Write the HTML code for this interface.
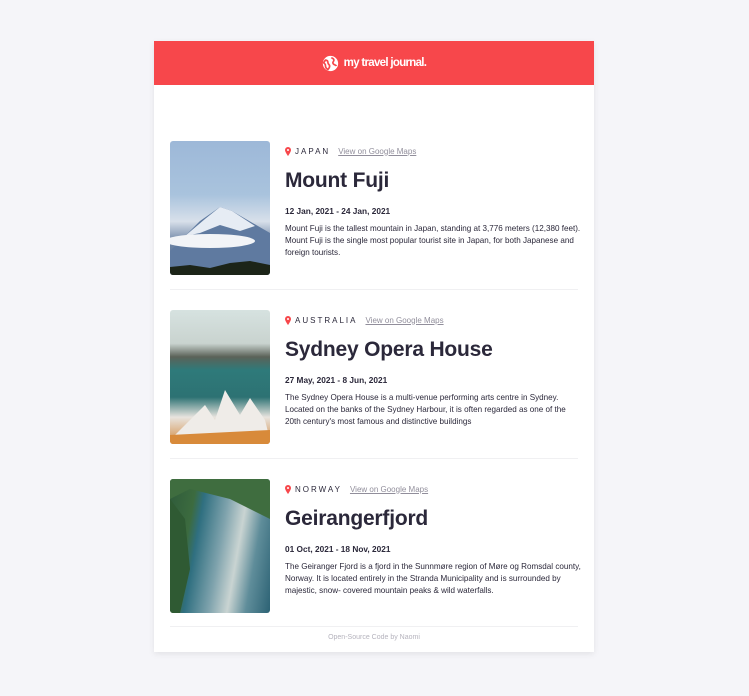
<!DOCTYPE html>
<html><head><meta charset="utf-8"><style>
*{margin:0;padding:0;box-sizing:border-box}
body{width:749px;height:696px;background:#f5f5f9;font-family:"Liberation Sans",sans-serif;position:relative;overflow:hidden}
.card{position:absolute;left:154px;top:41px;width:440px;height:611px;background:#fff;box-shadow:0 2px 6px rgba(0,0,0,.08)}
.hdr{height:44px;background:#f7474b;display:flex;align-items:center;justify-content:center;color:#fff;font-weight:bold;font-size:11.5px;letter-spacing:-0.7px}
.hdr svg{margin-right:5px}
.e{position:absolute;left:16px;width:408px;height:169px}
.img{position:absolute;left:0;top:0;width:100px;height:134px;border-radius:3px;overflow:hidden}
.t{position:absolute;left:115px;top:0;width:296px;color:#2b283a}
.c{font-size:8px;letter-spacing:2px;margin-top:5px;height:10px;display:flex;align-items:center}
.c svg{margin-right:4px}
.c a{color:#918e9b;letter-spacing:0;text-decoration:underline;margin-left:8px;font-size:8px}
h1{font-size:21px;font-weight:bold;margin-top:12px;height:26px;line-height:26px;letter-spacing:-0.2px}
.d{font-size:8.3px;font-weight:bold;margin-top:12px;line-height:10px}
.p{font-size:8.1px;line-height:12px;margin-top:7px}
.hr{position:absolute;left:16px;width:408px;height:1px;background:#f0f0f2}
.f{position:absolute;top:593px;width:100%;text-align:center;font-size:7px;color:#b5b3bd}
</style></head><body>
<div class="card">
<div class="hdr"><svg width="17" height="17" viewBox="0 0 20 20"><circle cx="10" cy="10" r="9" fill="#fff"/><path d="M4 6c2 0 3 1 3 3s2 2 2 4-1 3-2 4c-2-1-3-3-3-5s-2-2-2-3zM11 3c1 1 3 1 3 3s-2 2-1 4 3 1 4 3" fill="none" stroke="#f7474b" stroke-width="2"/></svg>my travel journal.</div>
<div class="e" style="top:100px">
<div class="img" style="background:linear-gradient(180deg,#9db8d8 0%,#a9c3dd 40%,#d8e0ea 60%,#6f86a6 75%,#5d7597 92%,#1e2a22 100%)"><svg width="100" height="134" style="position:absolute"><path d="M0 110 L30 80 L50 66 L62 70 L100 92 L100 134 L0 134Z" fill="#5f7aa0"/><path d="M15 95 L35 78 L50 66 L62 70 L85 85 L70 90 L50 84 L30 92Z" fill="#e6ecf4"/><ellipse cx="40" cy="100" rx="45" ry="7" fill="#f2f4f7"/><path d="M0 134 L0 126 L20 124 L40 127 L60 122 L80 120 L100 124 L100 134Z" fill="#1c2418"/></svg></div>
<div class="t"><div class="c"><svg width="6" height="9" viewBox="0 0 6 9"><path d="M3 0a3 3 0 0 1 3 3c0 2-3 6-3 6S0 5 0 3a3 3 0 0 1 3-3z" fill="#f7474b"/><circle cx="3" cy="3" r="1" fill="#fff"/></svg>JAPAN<a>View on Google Maps</a></div>
<h1>Mount Fuji</h1><div class="d">12 Jan, 2021 - 24 Jan, 2021</div>
<div class="p">Mount Fuji is the tallest mountain in Japan, standing at 3,776 meters (12,380 feet). Mount Fuji is the single most popular tourist site in Japan, for both Japanese and foreign tourists.</div></div>
</div>
<div class="hr" style="top:248px"></div>
<div class="e" style="top:269px">
<div class="img" style="background:linear-gradient(180deg,#d6e2e0 0%,#c9d3cf 25%,#5b6258 35%,#2e7a7a 45%,#2d7273 65%,#e8e4df 80%,#d38a3f 100%)"><svg width="100" height="134" style="position:absolute"><path d="M20 110 L35 95 L45 110 L55 80 L70 105 L80 88 L95 110 L100 130 L0 130Z" fill="#efece8"/><path d="M0 125 L100 120 L100 134 L0 134Z" fill="#d88a3a"/></svg></div>
<div class="t"><div class="c"><svg width="6" height="9" viewBox="0 0 6 9"><path d="M3 0a3 3 0 0 1 3 3c0 2-3 6-3 6S0 5 0 3a3 3 0 0 1 3-3z" fill="#f7474b"/><circle cx="3" cy="3" r="1" fill="#fff"/></svg>AUSTRALIA<a>View on Google Maps</a></div>
<h1>Sydney Opera House</h1><div class="d">27 May, 2021 - 8 Jun, 2021</div>
<div class="p">The Sydney Opera House is a multi-venue performing arts centre in Sydney. Located on the banks of the Sydney Harbour, it is often regarded as one of the 20th century's most famous and distinctive buildings</div></div>
</div>
<div class="hr" style="top:417px"></div>
<div class="e" style="top:438px">
<div class="img" style="background:linear-gradient(100deg,#2e5a3a 0%,#3c6b3f 22%,#2f6f80 30%,#7fa3ad 50%,#c9d4d2 65%,#5f8d9a 80%,#2c6274 100%)"><svg width="100" height="134" style="position:absolute"><path d="M0 0 L100 0 L100 40 L60 20 L20 10 L0 20Z" fill="#3f6d3f"/><path d="M0 20 L15 40 L20 90 L10 134 L0 134Z" fill="#2f5a33"/></svg></div>
<div class="t"><div class="c"><svg width="6" height="9" viewBox="0 0 6 9"><path d="M3 0a3 3 0 0 1 3 3c0 2-3 6-3 6S0 5 0 3a3 3 0 0 1 3-3z" fill="#f7474b"/><circle cx="3" cy="3" r="1" fill="#fff"/></svg>NORWAY<a>View on Google Maps</a></div>
<h1>Geirangerfjord</h1><div class="d">01 Oct, 2021 - 18 Nov, 2021</div>
<div class="p">The Geiranger Fjord is a fjord in the Sunnmøre region of Møre og Romsdal county, Norway. It is located entirely in the Stranda Municipality and is surrounded by majestic, snow- covered mountain peaks &amp; wild waterfalls.</div></div>
</div>
<div class="hr" style="top:585px"></div>
<div class="f">Open-Source Code by Naomi</div>
</div>
</body></html>
